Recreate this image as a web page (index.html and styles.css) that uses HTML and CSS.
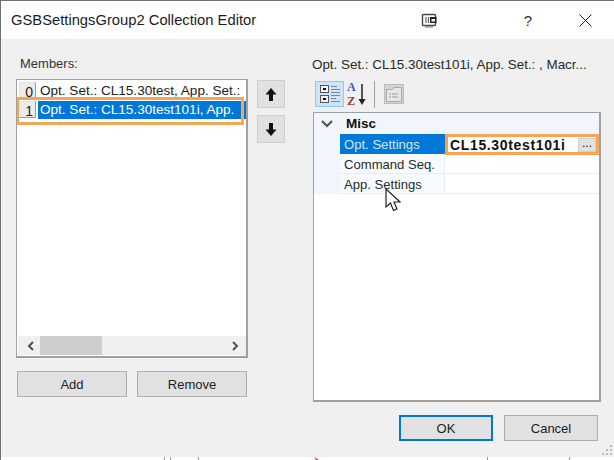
FILE: index.html
```html
<!DOCTYPE html>
<html lang="en">
<head>
<meta charset="utf-8">
<title>Collection Editor</title>
<link rel="stylesheet" href="styles.css">
</head>
<body>
<div class="window">
  <header class="titlebar">
    <span class="title">GSBSettingsGroup2 Collection Editor</span>
    <span class="title-icons">
      <svg class="snap-icon" width="16" height="15" viewBox="0 0 16 15"><path d="M2.5 1.5h11a1 1 0 0 1 1 1v9a1 1 0 0 1-1 1h-11a1 1 0 0 1-1-1v-9a1 1 0 0 1 1-1z" fill="#fff" stroke="#444" stroke-width="1.4"/><path d="M5 4v6M7.500 4v6" stroke="#666" stroke-width="1.200"/><rect x="9" y="4" width="6.500" height="6" fill="#222"/><rect x="10.500" y="6" width="3.500" height="2.500" fill="#fff"/><path d="M4 14h8" stroke="#777"/></svg>
      <span class="help">?</span>
      <svg class="close-icon" width="13" height="13" viewBox="0 0 13 13"><path d="M.5.500l12 12M12.500.500l-12 12" stroke="#222" stroke-width="1" fill="none"/></svg>
    </span>
  </header>
  <main class="content">
    <section class="left">
      <div class="label">Members:</div>
      <div class="listbox">
        <div class="rows">
          <div class="row"><span class="idx">0</span><span class="row-text">Opt. Set.: CL15.30test, App. Set.:</span></div>
          <div class="row selected"><span class="idx">1</span><span class="row-text">Opt. Set.: CL15.30test101i, App.</span></div>
          <div class="list-mark"></div>
        </div>
        <div class="hscroll">
          <svg width="8" height="10" viewBox="0 0 8 10"><path d="M6 1L2 5l4 4" fill="none" stroke="#505050" stroke-width="2"/></svg>
          <div class="thumb"></div>
          <svg width="8" height="10" viewBox="0 0 8 10"><path d="M2 1l4 4-4 4" fill="none" stroke="#505050" stroke-width="2"/></svg>
        </div>
      </div>
      <div class="left-buttons">
        <button class="btn">Add</button>
        <button class="btn">Remove</button>
      </div>
    </section>
    <section class="movers">
      <button class="move"><svg width="12" height="13" viewBox="0 0 12 13"><path d="M6 0l5.500 6.500H8V13H4V6.500H.5z" fill="#111"/></svg></button>
      <button class="move"><svg width="12" height="13" viewBox="0 0 12 13"><path d="M6 13L.5 6.500H4V0h4v6.500h3.500z" fill="#111"/></svg></button>
    </section>
    <section class="right">
      <div class="heading">Opt. Set.: CL15.30test101i, App. Set.: , Macr...</div>
      <div class="toolbar">
        <span class="tool active">
          <svg width="22" height="22" viewBox="0 0 22 22"><rect x="1.500" y="2.500" width="8" height="7" fill="#f4f4f4" stroke="#555"/><rect x="4" y="5" width="3" height="2" fill="#111"/><rect x="1.500" y="12.500" width="8" height="7" fill="#f4f4f4" stroke="#555"/><rect x="4" y="15" width="3" height="2" fill="#111"/><path d="M12 3.500h6M12 6.500h9M12 9.500h9M12 12.500h9M12 15.500h5M12 18.500h9" stroke="#7c8a96" stroke-width="1"/></svg>
        </span>
        <svg class="sort-icon" width="20" height="26" viewBox="0 0 20 26"><text x="0" y="10" class="az-a">A</text><text x="0" y="24" class="az-z">Z</text><path d="M15 3v19" stroke="#222" stroke-width="1.500"/><path d="M11.500 18l3.500 6 3.500-6z" fill="#222"/></svg>
        <span class="tool-sep"></span>
        <svg class="pages-icon" width="20" height="20" viewBox="0 0 20 20"><rect x=".5" y=".5" width="19" height="19" fill="#d4d4d4" stroke="#bdbdbd"/><path d="M2.500 5.500h6l1-2h8v14h-15z" fill="#e6e6e6" stroke="#a8a8a8"/><path d="M5 10h2M8 10h6M5 13h2M8 13h6" stroke="#a0a0a0"/></svg>
      </div>
      <div class="grid">
        <div class="cat"><svg class="chev" width="12" height="8" viewBox="0 0 12 8"><path d="M1 1l5 5 5-5" fill="none" stroke="#505050" stroke-width="2"/></svg><span class="cat-name">Misc</span></div>
        <div class="prop"><span class="gutter"></span><span class="pname sel">Opt. Settings</span><span class="pval"><b>CL15.30test101i</b><span class="dots">...</span></span></div>
        <div class="prop"><span class="gutter"></span><span class="pname">Command Seq.</span><span class="pval"></span></div>
        <div class="prop"><span class="gutter"></span><span class="pname">App. Settings</span><span class="pval"></span></div>
      </div>
      <div class="right-buttons">
        <button class="btn wide default">OK</button>
        <button class="btn wide">Cancel</button>
      </div>
    </section>
  </main>
  <div class="strip"></div>
  <svg class="cursor" width="16" height="25" viewBox="0 0 16 25"><path d="M1 1v18l4.500-4 3 7.500 3.500-1.500-3-7h6z" fill="#fff" stroke="#222" stroke-width="1.200"/></svg>
  <svg class="grip" width="12" height="12" viewBox="0 0 12 12"><path d="M9 1h2v2H9zM5 5h2v2H5zM9 5h2v2H9zM1 9h2v2H1zM5 9h2v2H5zM9 9h2v2H9z" fill="#bcbcbc"/></svg>
  <svg class="edge-marks" width="614" height="3" viewBox="0 0 614 3"><path d="M164.500 0v3M170.500 0v3M198.500 0v3M487.500 0v3M569.500 0v3" stroke="#999"/><path d="M314 0l5 3h-3z" fill="#d03030"/></svg>
</div>
</body>
</html>
```
FILE: styles.css
```css
* { box-sizing: border-box; }
html, body { margin: 0; padding: 0; background: #fff; }
body { width: 614px; height: 460px; overflow: hidden; font: 13px/1 "Liberation Sans", Arial, sans-serif; color: #222; }
button { font: inherit; color: inherit; padding: 0; }

.window { position: relative; width: 614px; height: 460px; display: flex; flex-direction: column; border-top: 1px solid #707070; border-left: 1px solid #707070; }

.titlebar { height: 38px; background: #fff; display: flex; align-items: center; justify-content: space-between; padding-left: 10px; flex: none; }
.title { font-size: 14.750px; color: #1c1c1c; }
.title-icons { display: flex; align-items: center; }
.snap-icon { margin-right: 87px; }
.help { font-size: 15px; color: #333; margin-right: 47px; }
.close-icon { margin-right: 22px; }

.content { height: 418px; flex: none; background: #f0f0f0; display: flex; padding: 15px 0 0 15px; }
.strip { flex: 1; background: #fff; }

.left { width: 232px; flex: none; }
.label { height: 25px; padding: 3px 0 0 4px; color: #333; font-size: 13px; }
.listbox { height: 279px; background: #fff; border: 1px solid #a0a0a0; border-width: 1px 2px 2px 1px; display: flex; flex-direction: column; }
.rows { flex: 1; position: relative; padding-top: 1px; overflow: hidden; }
.row { height: 19px; display: flex; align-items: center; white-space: nowrap; overflow: hidden; }
.idx { width: 17px; height: 17px; margin: 0 2px 0 2px; flex: none; background: #ececec; border: 1px solid; border-color: #e4e4e4 #9a9a9a #9a9a9a #e4e4e4; text-align: right; padding: 2px 2px 0 0; font-size: 14px; }
.row-text { padding-left: 2px; font-size: 13.550px; flex: 1; }
.selected .row-text { background: #0078d7; color: #fff; height: 18px; line-height: 18px; }
.list-mark { position: absolute; left: -1px; top: 17px; width: 228px; height: 28px; border: 3px solid #f5a655; }

.hscroll { height: 19px; margin: 0 0 1px 1px; background: #f0f0f0; display: flex; align-items: center; flex: none; padding-left: 9px; }
.thumb { width: 62px; height: 19px; background: #cdcdcd; margin: 0 auto 0 5px; }
.hscroll svg:last-child { margin-right: 7px; }

.left-buttons { display: flex; gap: 10px; margin: 13px 0 0 1px; }
.btn { width: 110px; height: 26px; background: #e1e1e1; border: 1px solid #adadad; color: #222; font-size: 13px; }

.movers { width: 28px; margin-left: 9px; flex: none; padding-top: 26px; display: flex; flex-direction: column; gap: 7px; }
.move { width: 28px; height: 28px; background: #e1e1e1; border: 1px solid #cfcfcf; display: flex; align-items: center; justify-content: center; }

.right { width: 288px; margin-left: 28px; flex: none; }
.heading { height: 26px; padding-top: 4px; margin-left: -1px; white-space: nowrap; font-size: 13.400px; color: #2a2a2a; }
.toolbar { height: 32px; display: flex; align-items: flex-start; padding: 1px 0 0 2px; }
.tool { width: 29px; height: 26px; display: flex; align-items: center; justify-content: center; background: #cce4f7; border: 1px solid #90c8f6; }
.sort-icon { margin-left: 3px; }
.az-a { font: bold 12px "Liberation Serif", serif; fill: #3a5bb5; }
.az-z { font: bold 12.500px "Liberation Serif", serif; fill: #a83a3a; }
.tool-sep { width: 1px; height: 27px; background: #a0a0a0; margin-left: 7px; }
.pages-icon { margin: 3px 0 0 9px; }

.grid { height: 290px; background: #fff; border: 1px solid #a0a0a0; border-width: 1px 2px 2px 1px; position: relative; }
.cat { height: 21px; background: #f0f6fb; display: flex; align-items: center; padding-left: 7px; }
.cat-name { font-weight: bold; margin-left: 13px; font-size: 13.500px; color: #111; }
.prop { height: 20px; display: flex; }
.gutter { width: 26px; background: #f0f6fb; flex: none; }
.pname { width: 105px; padding: 4px 0 0 4px; background: #f8fbfd; border-bottom: 1px solid #e6eff6; border-right: 1px solid #e6eff6; white-space: nowrap; font-size: 13.100px; color: #2a2a2a; }
.pname.sel { background: #0078d7; color: #cfe6f8; border: 0; }
.pval { flex: 1; border-bottom: 1px solid #e6eff6; display: flex; align-items: center; justify-content: space-between; position: relative; }
.pval b { font-size: 14px; letter-spacing: .65px; color: #111; margin-left: 5px; }
.dots { width: 18px; height: 14px; margin-right: 3px; background: #e1e1e1; border: 1px solid #d0d0d0; font-size: 12px; line-height: 8px; text-align: center; }
.prop:nth-child(2) .pval { border: 3px solid #f5a655; height: 21px; }
.prop:nth-child(2) .pval b { margin-left: 2px; }
.prop:nth-child(2) .dots { margin-right: 0; }

.right-buttons { display: flex; justify-content: flex-end; gap: 11px; margin: 13px 3px 0 0; }
.btn.wide { width: 94px; }
.btn.default { border: 2px solid #0078d7; }

.cursor { position: absolute; left: 384px; top: 187px; }
.grip { position: absolute; left: 600px; top: 443px; }
.edge-marks { position: absolute; left: -1px; bottom: 0; }
```
